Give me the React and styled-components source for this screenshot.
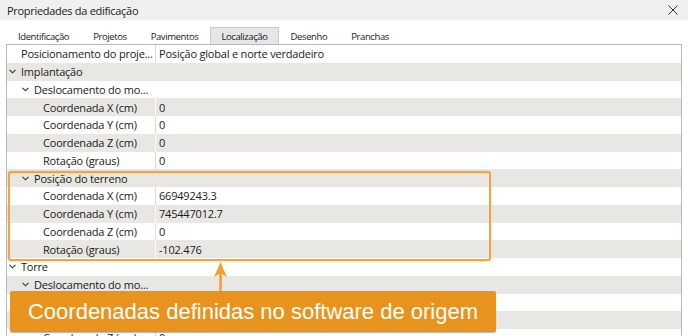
import React from "react";
import styled, { createGlobalStyle } from "styled-components";

const GlobalStyle = createGlobalStyle`
  html, body {
    margin: 0;
    padding: 0;
    background: #ffffff;
    overflow: hidden;
  }
`;

const rows = [
  { level: 0, label: "Posicionamento do proje...", value: "Posição global e norte verdadeiro", leaf: true },
  { level: 0, label: "Implantação", group: true },
  { level: 1, label: "Deslocamento do mo...", group: true },
  { level: 2, label: "Coordenada X (cm)", value: "0", leaf: true },
  { level: 2, label: "Coordenada Y (cm)", value: "0", leaf: true },
  { level: 2, label: "Coordenada Z (cm)", value: "0", leaf: true },
  { level: 2, label: "Rotação (graus)", value: "0", leaf: true },
  { level: 1, label: "Posição do terreno", group: true },
  { level: 2, label: "Coordenada X (cm)", value: "66949243.3", leaf: true },
  { level: 2, label: "Coordenada Y (cm)", value: "745447012.7", leaf: true },
  { level: 2, label: "Coordenada Z (cm)", value: "0", leaf: true },
  { level: 2, label: "Rotação (graus)", value: "-102.476", leaf: true },
  { level: 0, label: "Torre", group: true },
  { level: 1, label: "Deslocamento do mo...", group: true },
  { level: 2, label: "Coordenada X (cm)", value: "0", leaf: true },
  { level: 2, label: "Coordenada Y (cm)", value: "0", leaf: true },
  { level: 2, label: "Coordenada Z (cm)", value: "0", leaf: true },
];

const tabs = ["Identificação", "Projetos", "Pavimentos", "Localização", "Desenho", "Pranchas"];

const GRAY = "#e8e7e3";

const Window = styled.div`
  position: relative;
  width: 688px;
  height: 336px;
  overflow: hidden;
  background: #ffffff;
  font-family: "Open Sans", "Noto Sans", sans-serif;
  color: #1a1a1a;
`;

const TitleBar = styled.div`
  height: 20px;
  background: #f0f0f0;
  display: flex;
  align-items: center;
  justify-content: space-between;
  padding: 0 10px 0 7px;
`;

const Title = styled.span`
  font-size: 11px;
  letter-spacing: -0.3px;
  color: #1a1a1a;
`;

const Content = styled.div`
  padding: 7px 6px 0 6px;
`;

const TabBar = styled.div`
  display: flex;
  height: 17px;
`;

const Tab = styled.div`
  display: flex;
  align-items: center;
  padding: 0 ${(p) => (p.$active ? 10 : 11)}px;
  font-size: 9.5px;
  letter-spacing: -0.4px;
  color: #1a1a1a;
  background: ${(p) => (p.$active ? "#e6e6e6" : "transparent")};
  border: 1px solid ${(p) => (p.$active ? "#c8c8c8" : "transparent")};
  border-bottom: none;
  box-sizing: border-box;
`;

const Grid = styled.div`
  border: 1px solid #b9b9b9;
  border-bottom: none;
`;

const Row = styled.div`
  display: flex;
  height: 17.75px;
  align-items: center;
  background: ${(p) => (p.$odd ? GRAY : "#ffffff")};
  font-size: 11px;
  letter-spacing: -0.2px;
  white-space: nowrap;
`;

const LabelCell = styled.div`
  display: flex;
  align-items: center;
  width: ${(p) => (p.$group ? "auto" : "148px")};
  flex: ${(p) => (p.$group ? 1 : "none")};
  height: 100%;
  padding-left: ${(p) => p.$indent}px;
  box-sizing: border-box;
  overflow: hidden;
`;

const ValueCell = styled.div`
  flex: 1;
  height: 100%;
  display: flex;
  align-items: center;
  padding-left: 3px;
  border-left: 1px solid ${(p) => (p.$odd ? "#fbfbfa" : "#dcdbd7")};
`;

const Chevron = styled.svg`
  width: 7px;
  height: 5px;
  margin-right: 5px;
  flex: none;
`;

const Highlight = styled.div`
  position: absolute;
  left: 8px;
  top: 171px;
  width: 483px;
  height: 90px;
  box-sizing: border-box;
  border: 2px solid #f4a43a;
  border-radius: 3px;
  box-shadow: 0 0 1px rgba(0, 0, 0, 0.25);
`;

const Arrow = styled.svg`
  position: absolute;
  left: 213px;
  top: 262px;
  width: 15px;
  height: 30px;
`;

const Callout = styled.div`
  position: absolute;
  left: 10px;
  top: 291px;
  width: 486px;
  height: 41px;
  background: #e8931e;
  border-radius: 2px;
  box-shadow: 0 1px 1px rgba(0, 0, 0, 0.3);
  display: flex;
  align-items: center;
  justify-content: center;
  color: #ffffff;
  font-family: "Liberation Sans", Arial, sans-serif;
  font-size: 22px;
`;

function Caret() {
  return (
    <Chevron viewBox="0 0 7 5">
      <polyline points="0.5,0.8 3.5,3.8 6.5,0.8" fill="none" stroke="#333" strokeWidth="1.1" />
    </Chevron>
  );
}

export default function App() {
  return (
    <>
      <GlobalStyle />
      <Window>
        <TitleBar>
          <Title>Propriedades da edificação</Title>
          <svg width="10" height="10" viewBox="0 0 10 10">
            <path d="M0.5 0.5 L9.5 9.5 M9.5 0.5 L0.5 9.5" stroke="#333" strokeWidth="1" />
          </svg>
        </TitleBar>
        <Content>
          <TabBar>
            {tabs.map((t) => (
              <Tab key={t} $active={t === "Localização"}>
                {t}
              </Tab>
            ))}
          </TabBar>
          <Grid>
            {rows.map((r, i) => {
              const odd = i % 2 === 1;
              const indent = r.group ? 2 + r.level * 13 : r.level === 0 ? 14 : 36;
              return (
                <Row key={i} $odd={odd}>
                  <LabelCell $group={r.group} $indent={indent}>
                    {r.group && <Caret />}
                    {r.label}
                  </LabelCell>
                  {r.leaf && <ValueCell $odd={odd}>{r.value}</ValueCell>}
                </Row>
              );
            })}
          </Grid>
        </Content>
        <Highlight />
        <Arrow viewBox="0 0 15 30">
          <polygon points="7.5,0 14,15 8.8,12 8.8,30 6.2,30 6.2,12 1,15" fill="#f2a033" />
        </Arrow>
        <Callout>Coordenadas definidas no software de origem</Callout>
      </Window>
    </>
  );
}
